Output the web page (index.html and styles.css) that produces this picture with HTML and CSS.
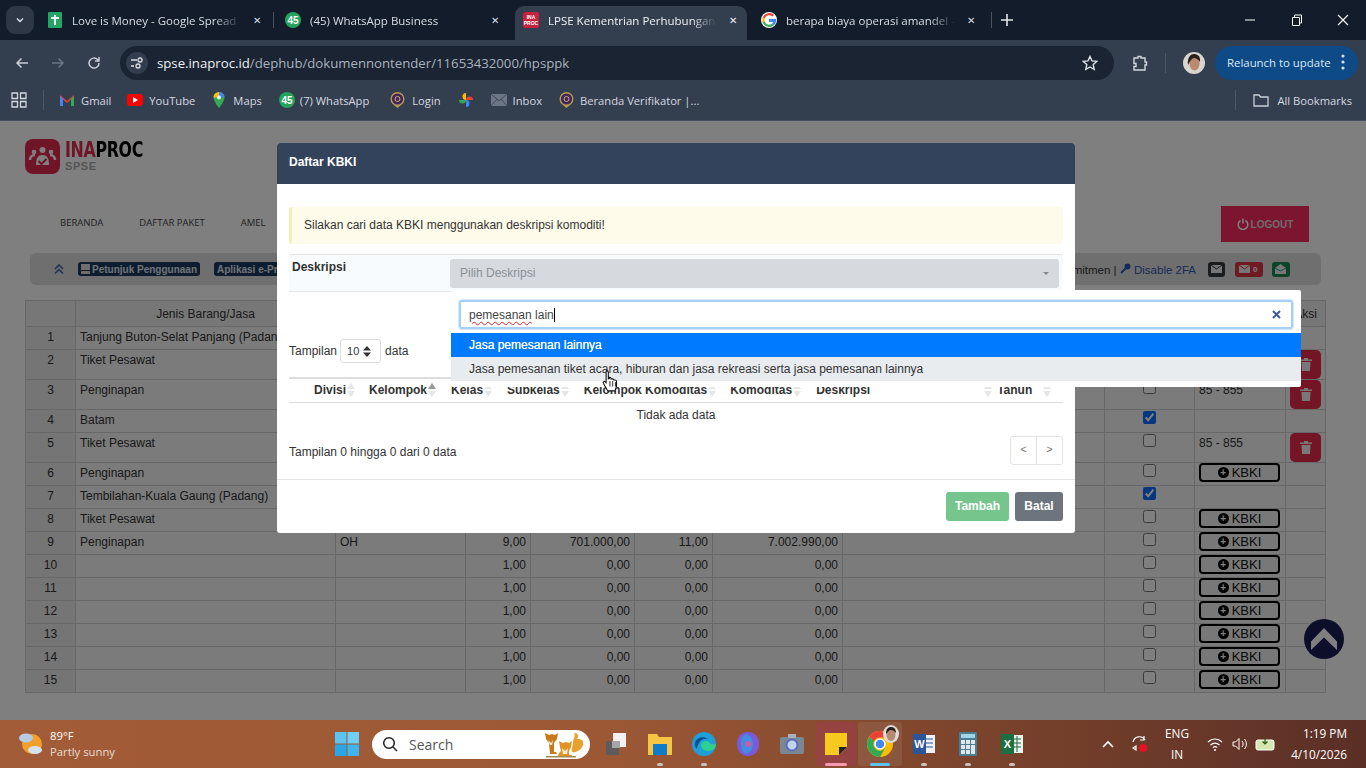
FILE: index.html
```html
<!DOCTYPE html>
<html lang="en">

<head>
    <meta charset="UTF-8">
    <title>LPSE Kementrian Perhubungan</title>
    <link rel="stylesheet" href="styles.css">
</head>

<body>
    <!-- browser tabs -->
    <div class="tabstrip">
        <div class="tab-search"><svg width="10" height="10" viewBox="0 0 10 10"><path d="M2 3.5l3 3 3-3" fill="none" stroke="#dfe3ea" stroke-width="1.4"/></svg></div>
        <div class="tab">
            <svg class="fav" viewBox="0 0 16 16"><rect x="1" y="0" width="14" height="16" rx="1" fill="#23a566"/><path d="M4 6h8M8 3v10" stroke="#fff" stroke-width="2"/></svg>
            <span class="tab-title">Love is Money - Google Spread</span><span class="tab-x">&#10005;</span>
        </div>
        <div class="tab-sep"></div>
        <div class="tab">
            <svg class="fav" viewBox="0 0 16 16"><circle cx="8" cy="8" r="8" fill="#25a35a"/><text x="8" y="11.5" class="fav-num">45</text></svg>
            <span class="tab-title">(45) WhatsApp Business</span><span class="tab-x">&#10005;</span>
        </div>
        <div class="tab active">
            <svg class="fav" viewBox="0 0 16 16"><rect width="16" height="16" rx="2" fill="#c4243e"/><text x="8" y="7" class="fav-tiny">INA</text><text x="8" y="12.5" class="fav-tiny">PROC</text></svg>
            <span class="tab-title">LPSE Kementrian Perhubungan</span><span class="tab-x">&#10005;</span>
        </div>
        <div class="tab">
            <svg class="fav" viewBox="0 0 16 16"><circle cx="8" cy="8" r="8" fill="#fff"/><path d="M8 3.2a4.8 4.8 0 0 1 3.3 1.3l1.7-1.7A7.2 7.2 0 0 0 1.7 5.2l2 1.6A4.8 4.8 0 0 1 8 3.2z" fill="#ea4335"/><path d="M3.7 6.8l-2-1.6a7.2 7.2 0 0 0 0 5.6l2-1.6a4.8 4.8 0 0 1 0-2.4z" fill="#fbbc05"/><path d="M8 12.8a4.8 4.8 0 0 1-4.3-3.6l-2 1.6A7.2 7.2 0 0 0 12.9 13.3L11 11.8A4.8 4.8 0 0 1 8 12.8z" fill="#34a853"/><path d="M15 7H8v3h4.100a3.500 3.500 0 0 1-1.100 1.800l1.900 1.500A7 7 0 0 0 15 7z" fill="#4285f4"/></svg>
            <span class="tab-title">berapa biaya operasi amandel -</span><span class="tab-x">&#10005;</span>
        </div>
        <div class="tab-sep plus-sep"></div>
        <svg class="tab-plus" width="12" height="12" viewBox="0 0 12 12"><path d="M6 0v12M0 6h12" stroke="#e3e6ec" stroke-width="1.6"/></svg>
        <div class="win-btns">
            <svg width="12" height="12" viewBox="0 0 12 12"><path d="M1 6h10" stroke="#fff"/></svg>
            <svg width="12" height="12" viewBox="0 0 12 12"><path d="M1.5 3.5h7v8h-7zM3.5 3.5V1h7v8H8.500" fill="none" stroke="#fff"/></svg>
            <svg width="12" height="12" viewBox="0 0 12 12"><path d="M1 1l10 10M11 1L1 11" stroke="#fff" stroke-width="1.1"/></svg>
        </div>
    </div>

    <!-- address bar -->
    <div class="toolbar">
        <svg class="tool-ic" viewBox="0 0 16 16"><path d="M14 8H3M7.5 3.500L3 8l4.500 4.500" fill="none" stroke="#c9ced6" stroke-width="1.5"/></svg>
        <svg class="tool-ic" viewBox="0 0 16 16"><path d="M2 8h11M8.5 3.500L13 8l-4.500 4.500" fill="none" stroke="#6d7684" stroke-width="1.5"/></svg>
        <svg class="tool-ic" viewBox="0 0 16 16"><path d="M13 8a5 5 0 1 1-1.500-3.500L13 6M13 2v4H9" fill="none" stroke="#c9ced6" stroke-width="1.5"/></svg>
        <div class="omnibox">
            <div class="site-info"><svg width="14" height="14" viewBox="0 0 14 14"><path d="M1 4h6M1 10h3" stroke="#dde1e7" stroke-width="1.3"/><circle cx="10" cy="4" r="2" fill="none" stroke="#dde1e7" stroke-width="1.3"/><circle cx="8" cy="10" r="2" fill="none" stroke="#dde1e7" stroke-width="1.3"/></svg></div>
            <span class="url"><b>spse.inaproc.id</b>/dephub/dokumennontender/11653432000/hpsppk</span>
            <svg class="star" width="16" height="16" viewBox="0 0 16 16"><path d="M8 1.500l2 4.400 4.800.5-3.600 3.200 1 4.700L8 12l-4.200 2.300 1-4.700L1.200 6.400 6 5.900z" fill="none" stroke="#dfe3ea" stroke-width="1.4"/></svg>
        </div>
        <svg class="ext-ic" width="18" height="18" viewBox="0 0 18 18"><path d="M3 4h4V2.500h3V4h4v4h1.500v3H14v5H3v-3.500h2v-3H3z" fill="none" stroke="#d3d7de" stroke-width="1.4"/></svg>
        <div class="tool-sep"></div>
        <svg class="avatar" width="22" height="22" viewBox="0 0 22 22"><circle cx="11" cy="11" r="11" fill="#d8d4ce"/><ellipse cx="11.500" cy="11.500" rx="5" ry="7" fill="#b98a70"/><path d="M5 13C4 5 8 2 11 2s7 2 6 8c-2-3-4-4-6-4S7 9 5 13z" fill="#2c201c"/></svg>
        <div class="relaunch">Relaunch to update<svg width="4" height="16" viewBox="0 0 4 16"><circle cx="2" cy="2" r="1.6" fill="#cfe2f7"/><circle cx="2" cy="8" r="1.6" fill="#cfe2f7"/><circle cx="2" cy="14" r="1.6" fill="#cfe2f7"/></svg></div>
    </div>

    <!-- bookmarks -->
    <div class="bookmarks">
        <svg class="bm-apps" width="16" height="16" viewBox="0 0 16 16"><path d="M1 1h5.500v5.500H1zM9.500 1H15v5.500H9.500zM1 9.500h5.500V15H1zM9.500 9.500H15V15H9.500z" fill="none" stroke="#d5d9e0" stroke-width="1.3"/></svg>
        <div class="bm-sep"></div>
        <div class="bm bm-gmail"><svg width="16" height="14" viewBox="0 0 16 14"><path d="M1 13V2l7 6 7-6v11h-3V6.500L8 10 4 6.500V13z" fill="#ea4335"/><path d="M1 13V3l3 3v7z" fill="#4285f4"/><path d="M12 13V6l3-3v10z" fill="#34a853"/></svg>Gmail</div>
        <div class="bm bm-yt"><svg width="16" height="12" viewBox="0 0 16 12"><rect width="16" height="12" rx="3" fill="#f00"/><path d="M6 3l5 3-5 3z" fill="#fff"/></svg>YouTube</div>
        <div class="bm bm-maps"><svg width="12" height="16" viewBox="0 0 12 16"><path d="M6 0a5.500 5.500 0 0 1 5.500 5.500C11.500 9.500 6 16 6 16S.5 9.500.5 5.500A5.500 5.500 0 0 1 6 0z" fill="#34a853"/><path d="M6 0a5.500 5.500 0 0 1 5.500 5.500L6 5.500z" fill="#4285f4"/><path d="M.5 5.500A5.500 5.500 0 0 1 6 0v5.500z" fill="#fbbc05"/><circle cx="6" cy="5.500" r="2" fill="#eee"/></svg>Maps</div>
        <div class="bm bm-wa"><svg width="16" height="16" viewBox="0 0 16 16"><circle cx="8" cy="8" r="8" fill="#25a35a"/><text x="8" y="11.5" class="fav-num">45</text></svg>(7) WhatsApp</div>
        <div class="bm bm-login"><svg width="15" height="16" viewBox="0 0 15 16"><path d="M4 13l3.500 3 3.500-3z" fill="#b89a4a"/><circle cx="7.500" cy="7" r="6.300" fill="#43245f" stroke="#b89a4a" stroke-width="1.4"/><circle cx="7.500" cy="7" r="2.500" fill="none" stroke="#c9b06a"/></svg>Login</div>
        <div class="bm bm-photos"><svg width="16" height="16" viewBox="0 0 16 16"><path d="M8 8V1a3.500 3.500 0 0 0 0 7z" fill="#fbbc05"/><path d="M8 8h7a3.500 3.500 0 0 0-7 0z" fill="#ea4335"/><path d="M8 8v7a3.500 3.500 0 0 0 0-7z" fill="#4285f4"/><path d="M8 8H1a3.500 3.500 0 0 0 7 0z" fill="#34a853"/></svg></div>
        <div class="bm bm-inbox"><svg width="16" height="12" viewBox="0 0 16 12"><rect width="16" height="12" fill="#6d7684"/><path d="M0 0l8 7 8-7M0 12l6-7M16 12l-6-7" fill="none" stroke="#404a59"/></svg>Inbox</div>
        <div class="bm bm-beranda"><svg width="15" height="16" viewBox="0 0 15 16"><path d="M4 13l3.500 3 3.500-3z" fill="#b89a4a"/><circle cx="7.500" cy="7" r="6.300" fill="#43245f" stroke="#b89a4a" stroke-width="1.4"/><circle cx="7.500" cy="7" r="2.500" fill="none" stroke="#c9b06a"/></svg>Beranda Verifikator |...</div>
        <div class="bm-sep bm-sep-right"></div>
        <div class="bm bm-all"><svg width="16" height="14" viewBox="0 0 16 14"><path d="M1 2h5l1.500 2H15v9H1z" fill="none" stroke="#c9ced6" stroke-width="1.3"/></svg>All Bookmarks</div>
    </div>

    <!-- page -->
    <div class="page">
        <div class="site-head">
            <div class="logo">
                <svg width="35" height="35" viewBox="0 0 35 35"><rect width="35" height="35" rx="8" fill="#e02a4e"/><circle cx="17.5" cy="11" r="3" fill="#fff"/><circle cx="9" cy="13" r="2.3" fill="#fff"/><circle cx="26" cy="13" r="2.3" fill="#fff"/><path d="M5 21c0-3 2-5 5-5M30 21c0-3-2-5-5-5" stroke="#fff" stroke-width="2.5" fill="none"/><path d="M11 26c0-7 2-10 6.500-10S24 19 24 26z" fill="#fff"/><path d="M13.5 22l3 3 5-5" stroke="#e02a4e" stroke-width="2" fill="none"/></svg>
                <div class="logo-text">
                    <div class="logo-name"><span>INA</span>PROC</div>
                    <div class="logo-sub">SPSE</div>
                </div>
            </div>
            <div class="nav-row">
                <div class="nav">
                    <span>BERANDA</span><span>DAFTAR PAKET</span><span>AMEL</span>
                </div>
                <div class="logout"><svg width="12" height="12" viewBox="0 0 12 12"><path d="M3.5 2.500a4.800 4.800 0 1 0 5 0M6 .5v5" fill="none" stroke="#fff" stroke-width="1.5"/></svg>LOGOUT</div>
            </div>
        </div>

        <div class="infobar">
            <div class="info-left">
                <svg class="chev" width="10" height="10" viewBox="0 0 10 10"><path d="M1 5l4-4 4 4M1 9.500l4-4 4 4" fill="none" stroke="#3a5fa8" stroke-width="1.5"/></svg>
                <span class="badge"><svg width="9" height="10" viewBox="0 0 9 10"><path d="M0 0h9v10H0z" fill="#ddd"/><path d="M0 6.500h9" stroke="#333"/></svg>Petunjuk Penggunaan</span>
                <span class="badge">Aplikasi e-Pr</span>
            </div>
            <div class="info-right">
                <span class="info-link">Komitmen | <svg width="11" height="11" viewBox="0 0 11 11"><circle cx="7.500" cy="3.500" r="3" fill="#2f57b0"/><path d="M5.500 5.500L1 10" stroke="#2f57b0" stroke-width="2"/></svg> <span class="blue-link">Disable 2FA</span></span>
                <span class="mail mail-dark"><svg width="11" height="8" viewBox="0 0 11 8"><rect width="11" height="8" fill="#eee"/><path d="M0 0l5.500 4L11 0" fill="none" stroke="#333"/></svg></span>
                <span class="mail mail-red"><svg width="11" height="8" viewBox="0 0 11 8"><rect width="11" height="8" fill="#eee"/><path d="M0 0l5.500 4L11 0" fill="none" stroke="#d33"/></svg><b>0</b></span>
                <span class="mail mail-green"><svg width="11" height="10" viewBox="0 0 11 10"><path d="M0 4l5.500-4L11 4v6H0z" fill="#eee"/><path d="M0 4l5.500 3L11 4" fill="none" stroke="#1a9"/></svg></span>
            </div>
        </div>

        <table class="hps">
            <thead>
                <tr><th></th><th>Jenis Barang/Jasa</th><th></th><th></th><th></th><th></th><th></th><th></th><th></th><th></th><th>Aksi</th></tr>
            </thead>
            <tbody>
                <tr><td class="no">1</td><td>Tanjung Buton-Selat Panjang (Padang)</td><td></td><td></td><td></td><td></td><td></td><td></td><td></td><td></td><td></td></tr>
                <tr class="tall"><td class="no">2</td><td>Tiket Pesawat</td><td></td><td></td><td></td><td></td><td></td><td></td><td class="chk"><input type="checkbox"></td><td>85 - 855</td><td class="act"><span class="trash"><svg width="12" height="13" viewBox="0 0 12 13"><path d="M0 1.500h12V3H0zM4 0h4v1.500H4zM1.500 4h9L10 13H2z" fill="#f2eef0"/></svg></span></td></tr>
                <tr class="tall"><td class="no">3</td><td>Penginapan</td><td></td><td></td><td></td><td></td><td></td><td></td><td class="chk"><input type="checkbox"></td><td>85 - 855</td><td class="act"><span class="trash"><svg width="12" height="13" viewBox="0 0 12 13"><path d="M0 1.500h12V3H0zM4 0h4v1.500H4zM1.500 4h9L10 13H2z" fill="#f2eef0"/></svg></span></td></tr>
                <tr><td class="no">4</td><td>Batam</td><td></td><td></td><td></td><td></td><td></td><td></td><td class="chk"><input type="checkbox" checked></td><td></td><td></td></tr>
                <tr class="tall"><td class="no">5</td><td>Tiket Pesawat</td><td></td><td></td><td></td><td></td><td></td><td></td><td class="chk"><input type="checkbox"></td><td>85 - 855</td><td class="act"><span class="trash"><svg width="12" height="13" viewBox="0 0 12 13"><path d="M0 1.500h12V3H0zM4 0h4v1.500H4zM1.500 4h9L10 13H2z" fill="#f2eef0"/></svg></span></td></tr>
                <tr><td class="no">6</td><td>Penginapan</td><td></td><td></td><td></td><td></td><td></td><td></td><td class="chk"><input type="checkbox"></td><td class="kb"><span class="kbki"><i>+</i>KBKI</span></td><td></td></tr>
                <tr><td class="no">7</td><td>Tembilahan-Kuala Gaung (Padang)</td><td></td><td></td><td></td><td></td><td></td><td></td><td class="chk"><input type="checkbox" checked></td><td></td><td></td></tr>
                <tr><td class="no">8</td><td>Tiket Pesawat</td><td></td><td></td><td></td><td></td><td></td><td></td><td class="chk"><input type="checkbox"></td><td class="kb"><span class="kbki"><i>+</i>KBKI</span></td><td></td></tr>
                <tr><td class="no">9</td><td>Penginapan</td><td>OH</td><td class="num">9,00</td><td class="num">701.000,00</td><td class="num">11,00</td><td class="num">7.002.990,00</td><td></td><td class="chk"><input type="checkbox"></td><td class="kb"><span class="kbki"><i>+</i>KBKI</span></td><td></td></tr>
                <tr><td class="no">10</td><td></td><td></td><td class="num">1,00</td><td class="num">0,00</td><td class="num">0,00</td><td class="num">0,00</td><td></td><td class="chk"><input type="checkbox"></td><td class="kb"><span class="kbki"><i>+</i>KBKI</span></td><td></td></tr>
                <tr><td class="no">11</td><td></td><td></td><td class="num">1,00</td><td class="num">0,00</td><td class="num">0,00</td><td class="num">0,00</td><td></td><td class="chk"><input type="checkbox"></td><td class="kb"><span class="kbki"><i>+</i>KBKI</span></td><td></td></tr>
                <tr><td class="no">12</td><td></td><td></td><td class="num">1,00</td><td class="num">0,00</td><td class="num">0,00</td><td class="num">0,00</td><td></td><td class="chk"><input type="checkbox"></td><td class="kb"><span class="kbki"><i>+</i>KBKI</span></td><td></td></tr>
                <tr><td class="no">13</td><td></td><td></td><td class="num">1,00</td><td class="num">0,00</td><td class="num">0,00</td><td class="num">0,00</td><td></td><td class="chk"><input type="checkbox"></td><td class="kb"><span class="kbki"><i>+</i>KBKI</span></td><td></td></tr>
                <tr><td class="no">14</td><td></td><td></td><td class="num">1,00</td><td class="num">0,00</td><td class="num">0,00</td><td class="num">0,00</td><td></td><td class="chk"><input type="checkbox"></td><td class="kb"><span class="kbki"><i>+</i>KBKI</span></td><td></td></tr>
                <tr><td class="no">15</td><td></td><td></td><td class="num">1,00</td><td class="num">0,00</td><td class="num">0,00</td><td class="num">0,00</td><td></td><td class="chk"><input type="checkbox"></td><td class="kb"><span class="kbki"><i>+</i>KBKI</span></td><td></td></tr>
            </tbody>
        </table>

        <div class="up-btn"><svg width="26" height="22" viewBox="0 0 26 22"><path d="M0 13.500L13 0l13 13.500V22L13 9.500 0 22z" fill="#fff"/></svg></div>

        <div class="backdrop"></div>

        <!-- modal -->
        <div class="modal">
            <div class="modal-head">Daftar KBKI</div>
            <div class="modal-body">
                <div class="alert">Silakan cari data KBKI menggunakan deskripsi komoditi!</div>
                <div class="form-row">
                    <label>Deskripsi</label>
                    <div class="select-box">Pilih Deskripsi<span class="caret-down"></span></div>
                </div>
                <div class="length-row">Tampilan <span class="length-select">10<svg width="8" height="11" viewBox="0 0 8 11"><path d="M4 0l4 4.500H0zM4 11L0 6.500h8z" fill="#333"/></svg></span> data</div>
                <div class="kbki-head">
                    <span class="col-divisi">Divisi<i class="sort"></i></span>
                    <span class="col-kelompok">Kelompok<i class="sort on"></i></span>
                    <span class="col-kelas">Kelas<i class="sort"></i></span>
                    <span class="col-subkelas">Subkelas<i class="sort"></i></span>
                    <span class="col-kk">Kelompok Komoditas<i class="sort"></i></span>
                    <span class="col-kom">Komoditas<i class="sort"></i></span>
                    <span class="col-desk">Deskripsi<i class="sort"></i></span>
                    <span class="col-tahun">Tahun<i class="sort"></i></span>
                </div>
                <div class="empty">Tidak ada data</div>
                <div class="table-foot">
                    <span class="foot-info">Tampilan 0 hingga 0 dari 0 data</span>
                    <div class="pager"><span>&lt;</span><span>&gt;</span></div>
                </div>
            </div>
            <div class="modal-foot">
                <button class="btn btn-add">Tambah</button>
                <button class="btn btn-cancel">Batal</button>
            </div>
        </div>

        <!-- select2 dropdown -->
        <div class="dropdown">
            <div class="search-wrap">
                <div class="search-input"><span class="typo">pemesanan</span>&nbsp;lain<span class="text-caret"></span><svg class="clear" width="9" height="9" viewBox="0 0 9 9"><path d="M1 1l7 7M8 1L1 8" stroke="#3f5a8c" stroke-width="2"/></svg></div>
            </div>
            <div class="opt opt-active">Jasa pemesanan lainnya</div>
            <div class="opt opt-hover">Jasa pemesanan tiket acara, hiburan dan jasa rekreasi serta jasa pemesanan lainnya</div>
        </div>

        <svg class="cursor" width="17" height="23" viewBox="0 0 15 21"><path d="M4 1.500c1 0 1.500.6 1.500 1.500v6l1-.2V7.500c1 0 1.500.3 1.500 1V9l1 0c1 0 1.500.5 1.500 1l1 0c1 0 1.500.7 1.500 1.500V16l-1.500 4H5L1 13c-.5-1 .5-2 1.500-1.500l1 1V3c0-1 .2-1.500.5-1.500z" fill="#fff" stroke="#111"/><path d="M7 11v5M9.500 11v5M12 12v4" stroke="#111" stroke-width=".8"/></svg>
    </div>

    <!-- windows taskbar -->
    <div class="taskbar">
        <div class="weather">
            <svg width="28" height="28" viewBox="0 0 28 28"><circle cx="15" cy="14" r="10" fill="#f2a02b"/><ellipse cx="9" cy="8" rx="7" ry="4.500" fill="#b6cbe4"/><ellipse cx="18" cy="20" rx="7" ry="4" fill="#d4e2f2"/></svg>
            <div class="weather-text"><div>89°F</div><div class="dim">Partly sunny</div></div>
        </div>
        <svg class="start" width="24" height="24" viewBox="0 0 24 24"><path d="M0 0h11.500v11.500H0z" fill="#5cc4f2"/><path d="M12.500 0H24v11.500H12.500z" fill="#6fd0f7"/><path d="M0 12.500h11.500V24H0z" fill="#2aa6e6"/><path d="M12.500 12.500H24V24H12.500z" fill="#3fb5ee"/></svg>
        <div class="task-search">
            <svg width="16" height="16" viewBox="0 0 16 16"><circle cx="7" cy="7" r="5.300" fill="none" stroke="#222" stroke-width="1.5"/><path d="M11 11l4 4" stroke="#222" stroke-width="1.5"/></svg>
            <span>Search</span>
            <svg class="fox" width="42" height="28" viewBox="0 0 42 28"><path d="M28 22c6 1 12-4 11-10-1-3-3-3-6-3 2-3 1-6-3-6 2 3-1 6-1 9 0 4-2 7-1 10z" fill="#e8a02f"/><path d="M1 3l4 2 3-1 3 1 3-2-1 6-3 4v9h2l1 2H6l-1-11-3-4z" fill="#c9791a"/><path d="M15 11l4 2 3-1 3 1 3-2-1 6-2 4v4h3v1H14l1-3 2-2-1-4z" fill="#e29324"/><path d="M18 18l3 3 3-3-1 6h-4z" fill="#fbeed8"/><path d="M4 10l3 3 2-3-1 5H6z" fill="#fbeed8"/><path d="M2 26h30v1.500H2z" fill="#9c8a55"/></svg>
        </div>
        <div class="task-icons">
            <div class="ti"><svg width="20" height="22" viewBox="0 0 20 22"><rect x="0" y="8" width="13" height="14" fill="#5d5b5b"/><rect x="7" y="0" width="13" height="14" fill="#f2f2f2"/><rect x="6" y="8" width="8" height="7" fill="#a6a6a8"/></svg></div>
            <div class="ti"><svg width="24" height="22" viewBox="0 0 24 22"><path d="M0 1h9l2 3h13v18H0z" fill="#f6c544"/><rect x="5" y="11" width="14" height="11" fill="#0f7cc9"/></svg><i class="pip"></i></div>
            <div class="ti"><svg width="24" height="24" viewBox="0 0 24 24"><circle cx="12" cy="12" r="12" fill="#1f9fd8"/><path d="M24 12c0 5-4 7-8 7s-7-3-7-6c0-2 2-4 5-4 2 0 4 1 4 3 3 1 6 0 6 0z" fill="#2fd08f"/><path d="M3 10c2-5 9-6 13-3-5-1-10 2-11 10-2-2-3-5-2-7z" fill="#0b4f96"/></svg><i class="pip"></i></div>
            <div class="ti"><svg width="22" height="24" viewBox="0 0 22 24"><path d="M11 0c7 0 11 5 11 12s-4 12-11 12S0 19 0 12 4 0 11 0z" fill="#7a5ad8"/><path d="M8 2c5 1 8 5 8 10s-3 9-8 10c-3-3-4-6-4-10s1-7 4-10z" fill="#3f8fe0"/><circle cx="11" cy="12" r="3" fill="#d35aa0"/></svg></div>
            <div class="ti"><svg width="24" height="20" viewBox="0 0 24 20"><rect y="3" width="24" height="17" rx="2" fill="#7b8894"/><rect x="8" width="8" height="4" fill="#a7b1ba"/><circle cx="12" cy="11" r="5.500" fill="#c4d3f0" stroke="#5b6cc0" stroke-width="2"/></svg></div>
            <div class="ti ti-active"><svg width="22" height="22" viewBox="0 0 22 22"><path d="M0 0h22v14l-8 8H0z" fill="#f7c91f"/><path d="M14 22l8-8h-8z" fill="#222"/></svg><i class="pip pip-pink"></i></div>
            <div class="ti ti-chrome"><svg width="26" height="26" viewBox="0 0 26 26"><circle cx="13" cy="13" r="13" fill="#fbbc05"/><path d="M13 0a13 13 0 0 1 11.300 6.500H13a6.500 6.500 0 0 0-6 4L2.300 5.700A13 13 0 0 1 13 0z" fill="#ea4335"/><path d="M2.300 5.700A13 13 0 0 0 13 26l5.500-9.500a6.500 6.500 0 0 1-11.500-6z" fill="#34a853"/><circle cx="13" cy="13" r="5" fill="#4285f4" stroke="#fff" stroke-width="1.5"/></svg><svg class="ti-face" width="16" height="18" viewBox="0 0 16 18"><ellipse cx="8" cy="9" rx="8" ry="9" fill="#ddd"/><ellipse cx="8" cy="10" rx="4.500" ry="6" fill="#b98a70"/><path d="M3 9c0-5 2-7 5-7s5 2 5 6c-2-2-3-3-5-3s-3 2-5 4z" fill="#2c201c"/></svg><i class="pip pip-blue"></i></div>
            <div class="ti"><svg width="22" height="22" viewBox="0 0 22 22"><rect x="8" y="2" width="14" height="18" fill="#eef2f8"/><path d="M13 6h7M13 10h7M13 14h7" stroke="#2b579a"/><rect y="1" width="13" height="20" rx="1" fill="#2b579a"/><text x="6.500" y="15" class="ti-letter">W</text></svg><i class="pip"></i></div>
            <div class="ti"><svg width="18" height="24" viewBox="0 0 18 24"><rect width="18" height="24" rx="1" fill="#4a7e90"/><rect x="2" y="2" width="14" height="4" fill="#9fd5e6"/><path d="M2 8h4v4H2zM7 8h4v4H7zM12 8h4v4h-4zM2 13h4v4H2zM7 13h4v4H7zM12 13h4v9h-4zM2 18h4v4H2zM7 18h4v4H7z" fill="#dfe7ea"/></svg><i class="pip"></i></div>
            <div class="ti"><svg width="22" height="22" viewBox="0 0 22 22"><rect x="8" y="2" width="14" height="18" fill="#eaf4ec"/><path d="M13 6h7M13 10h7M13 14h7M16 3v16" stroke="#1d6f42"/><rect y="1" width="13" height="20" rx="1" fill="#1d6f42"/><text x="6.500" y="15" class="ti-letter">X</text></svg><i class="pip"></i></div>
        </div>
        <div class="tray">
            <svg class="tray-chev" width="12" height="8" viewBox="0 0 12 8"><path d="M1 7l5-5 5 5" fill="none" stroke="#fff" stroke-width="1.6"/></svg>
            <svg class="tray-sync" width="18" height="20" viewBox="0 0 18 20"><path d="M2 8a6.500 6.500 0 0 1 12-2M13 2v4H9M2 14l3-2v4z" fill="none" stroke="#fff" stroke-width="1.2"/><circle cx="12" cy="14" r="4" fill="#e81123"/></svg>
            <div class="lang"><div>ENG</div><div>IN</div></div>
            <svg class="tray-wifi" width="16" height="14" viewBox="0 0 16 14"><path d="M1 5c4-4 10-4 14 0M3.500 8c3-2.500 6-2.500 9 0M6 10.500c1.300-1 2.700-1 4 0" fill="none" stroke="#fff" stroke-width="1.2"/><circle cx="8" cy="13" r="1" fill="#fff"/></svg>
            <svg class="tray-vol" width="16" height="14" viewBox="0 0 16 14"><path d="M1 5h2.500L7 1.500v11L3.500 9H1zM10 4c1.500 1.500 1.500 4.500 0 6M12.500 2c2.500 3 2.500 7 0 10" fill="none" stroke="#fff"/></svg>
            <svg class="tray-bat" width="20" height="14" viewBox="0 0 20 14"><rect x="1" y="3" width="18" height="10" rx="2" fill="#d4e8b0" stroke="#fff"/><path d="M10 0v7M7.500 4.500L10 7l2.500-2.500" fill="none" stroke="#2c5a1a" stroke-width="1.2"/></svg>
            <div class="clock"><div>1:19 PM</div><div>4/10/2026</div></div>
        </div>
    </div>
</body>

</html>
```
FILE: styles.css
```css
* {
    box-sizing: border-box;
}

html,
body {
    margin: 0;
    height: 768px;
    overflow: hidden;
}

body {
    font-family: "Liberation Sans", Arial, sans-serif;
    font-size: 12px;
    color: #333;
    display: flex;
    flex-direction: column;
}

/* browser chrome */
.tabstrip {
    height: 40px;
    background-color: #131c2b;
    display: flex;
    align-items: flex-end;
    font-family: "Open Sans", sans-serif;
    color: #d9dde3;
    flex-shrink: 0;
}

.tab-search {
    width: 28px;
    height: 28px;
    margin: 0 5px 6px 6px;
    background-color: #2d3746;
    border-radius: 9px;
    display: flex;
    align-items: center;
    justify-content: center;
}

.tab {
    width: 232px;
    height: 34px;
    padding: 0 8px 6px;
    display: flex;
    align-items: center;
    border-radius: 9px 9px 0 0;
    font-size: 11.5px;
    margin-right: 6px;
}

.tab.active {
    background-color: #333e4e;
    color: #f0f2f5;
}

.fav {
    width: 16px;
    height: 16px;
    margin-right: 9px;
    flex-shrink: 0;
}

.fav-num {
    font-size: 10px;
    font-weight: bold;
    fill: #fff;
    text-anchor: middle;
    font-family: "Liberation Sans", sans-serif;
}

.fav-tiny {
    font-size: 5px;
    font-weight: bold;
    fill: #fff;
    text-anchor: middle;
    font-family: "Liberation Sans", sans-serif;
}

.tab-title {
    flex: 1;
    white-space: nowrap;
    overflow: hidden;
    -webkit-mask-image: linear-gradient(to right, #000 85%, transparent);
    mask-image: linear-gradient(to right, #000 85%, transparent);
}

.tab-x {
    width: 12px;
    margin-left: 10px;
    font-size: 10px;
    text-align: center;
}

.tab-sep {
    width: 1px;
    height: 16px;
    background-color: #4a5361;
    margin: 0 3px 12px -4px;
}

.plus-sep {
    margin: 0 0 12px 0;
}

.tab-plus {
    margin: 0 0 14px 9px;
}

.win-btns {
    margin-left: auto;
    width: 140px;
    height: 40px;
    display: flex;
    align-items: center;
    justify-content: space-between;
    padding: 0 17px 0 18px;
}

.toolbar {
    height: 44px;
    background-color: #333e4e;
    display: flex;
    align-items: flex-start;
    padding: 6px 7px 0 14px;
    flex-shrink: 0;
}

.tool-ic {
    width: 16px;
    height: 16px;
    margin: 9px 20px 0 0;
}

.tool-ic:nth-child(3) {
    margin-right: 18px;
}

.omnibox {
    width: 994px;
    height: 34px;
    background-color: #1a2433;
    border-radius: 17px;
    display: flex;
    align-items: center;
    padding: 0 16px 0 6px;
    font-family: "Open Sans", sans-serif;
    font-size: 13.2px;
    color: #aab2be;
}

.site-info {
    width: 22px;
    height: 22px;
    border-radius: 50%;
    background-color: #323d4d;
    display: flex;
    align-items: center;
    justify-content: center;
    margin-right: 9px;
}

.url b {
    font-weight: normal;
    color: #eef0f4;
}

.star {
    margin-left: auto;
}

.ext-ic {
    margin: 8px 0 0 17px;
}

.tool-sep {
    width: 1px;
    height: 20px;
    background-color: #4c5665;
    margin: 7px 16px 0 16px;
}

.avatar {
    margin: 6px 0 0 1px;
}

.relaunch {
    width: 143px;
    height: 34px;
    margin-left: 10px;
    border-radius: 17px;
    background-color: #0d4a86;
    color: #dbe9f8;
    font-family: "Open Sans", sans-serif;
    font-size: 11.4px;
    display: flex;
    align-items: center;
    justify-content: space-between;
    padding: 0 13px 2px 12px;
    white-space: nowrap;
}

.bookmarks {
    height: 37px;
    background-color: #333e4e;
    border-bottom: 1px solid #48535f;
    display: flex;
    align-items: center;
    padding: 0 0 4px 11px;
    font-family: "Open Sans", sans-serif;
    font-size: 11.2px;
    color: #d5d9e0;
    flex-shrink: 0;
}

.bm-sep {
    width: 1px;
    height: 20px;
    background-color: #4c5665;
    margin: 0 15px 0 16px;
}

.bm {
    display: flex;
    align-items: center;
    gap: 6px;
    white-space: nowrap;
}

.bm-yt {
    margin-left: 16px;
}

.bm-maps {
    margin-left: 18px;
    gap: 8px;
}

.bm-wa {
    margin-left: 17px;
    gap: 5px;
}

.bm-login {
    margin-left: 21px;
    gap: 7px;
}

.bm-photos {
    margin-left: 17px;
}

.bm-inbox {
    margin-left: 17px;
}

.bm-beranda {
    margin-left: 17px;
}

.bm-sep-right {
    margin: 0 17px 0 auto;
}

.bm-all {
    gap: 8px;
    margin-right: 14px;
}

/* page behind the dialog */
.page {
    position: relative;
    flex: 1;
    background-color: #fff;
    overflow: hidden;
}

.site-head {
    padding: 18px 57px 0 25px;
    height: 132px;
}

.logo {
    display: flex;
    gap: 5px;
    height: 35px;
}

.logo-name {
    font-family: "DejaVu Sans Condensed", "DejaVu Sans", sans-serif;
    font-weight: bold;
    font-size: 22px;
    line-height: 21px;
    letter-spacing: -.4px;
    color: #000;
    transform: scaleX(.8);
    transform-origin: left;
    white-space: nowrap;
}

.logo-name span {
    color: #e02a4e;
}

.logo-sub {
    font-weight: bold;
    font-size: 11px;
    line-height: 10px;
    margin-top: 1px;
    color: #aaa;
    letter-spacing: .6px;
}

.nav-row {
    display: flex;
    justify-content: space-between;
    margin-top: 32px;
}

.nav {
    font-family: "Open Sans", sans-serif;
    font-size: 9.5px;
    padding: 10px 0 0 35px;
    display: flex;
    gap: 36px;
    color: #444;
}

.logout {
    width: 88px;
    height: 36px;
    background-color: #f62a60;
    color: #e9d5da;
    font-size: 10px;
    font-weight: bold;
    display: flex;
    align-items: center;
    justify-content: center;
    gap: 2px;
}

.infobar {
    height: 32px;
    margin: 0 45px 0 30px;
    border-radius: 6px;
    background-color: #dedede;
    display: flex;
    justify-content: space-between;
    align-items: center;
    padding: 0 31px 0 24px;
}

.info-left,
.info-right {
    display: flex;
    align-items: center;
}

.chev {
    margin-right: 14px;
}

.badge {
    display: flex;
    align-items: center;
    gap: 2px;
    height: 14px;
    padding: 0 3px;
    border-radius: 3px;
    background-color: #1b3a5e;
    color: #dfe7f0;
    font-size: 10px;
    font-weight: bold;
    margin-right: 14px;
}

.info-link {
    font-size: 11.5px;
    margin-right: 12px;
}

.blue-link {
    color: #2f57b0;
}

.mail {
    height: 15px;
    margin-right: 10px;
    padding: 0 3px;
    border-radius: 3px;
    display: flex;
    align-items: center;
    gap: 3px;
    font-size: 8px;
    color: #fff;
}

.mail-dark {
    background-color: #343a40;
    width: 17px;
}

.mail-red {
    background-color: #dc3545;
    width: 28px;
    margin-right: 9px;
    padding: 0 4px;
}

.mail-green {
    background-color: #198754;
    width: 18px;
    margin-right: 0;
}

.hps {
    margin: 15px 0 0 25px;
    width: 1301px;
    table-layout: fixed;
    border-collapse: collapse;
    background-color: #f6f6f6;
}

.hps th:nth-child(1) {
    width: 50px;
}

.hps th:nth-child(2) {
    width: 260px;
}

.hps th:nth-child(3) {
    width: 130px;
}

.hps th:nth-child(4) {
    width: 65px;
}

.hps th:nth-child(5) {
    width: 104px;
}

.hps th:nth-child(6) {
    width: 78px;
}

.hps th:nth-child(7) {
    width: 130px;
}

.hps th:nth-child(8) {
    width: 262px;
}

.hps th:nth-child(9) {
    width: 90px;
}

.hps th:nth-child(10) {
    width: 91px;
}

.hps th,
.hps td {
    border: 1px solid #d0d0d0;
    padding: 1px 4px;
    line-height: 18px;
    vertical-align: top;
    font-weight: normal;
    white-space: nowrap;
    overflow: hidden;
}

.hps thead tr {
    height: 26px;
}

.hps thead th {
    vertical-align: middle;
    background-color: #eee;
}

.hps tbody tr {
    height: 23px;
}

.hps tbody tr.tall {
    height: 30px;
}

.hps .no {
    text-align: center;
    background-color: #eaeaea;
}

.num {
    text-align: right;
}

.chk {
    text-align: center;
}

.chk input {
    width: 13px;
    height: 13px;
    margin: 0;
    accent-color: #0d6efd;
}

.hps .kb {
    padding: 0 4px;
}

.kbki {
    display: flex;
    align-items: center;
    justify-content: center;
    gap: 3px;
    width: 81px;
    height: 19px;
    border: 2px solid #000;
    border-radius: 4px;
    color: #111;
    font-size: 13px;
    background-color: #f0f0f0;
}

.kbki i {
    width: 11px;
    height: 11px;
    border-radius: 50%;
    background-color: #000;
    color: #fff;
    font: bold 10px/11px "Liberation Sans", sans-serif;
    text-align: center;
}

.hps .act {
    padding: 0;
    text-align: center;
    line-height: 0;
}

.trash {
    display: inline-flex;
    align-items: center;
    justify-content: center;
    width: 31px;
    height: 29px;
    background-color: #e62a48;
    border-radius: 5px;
}

.backdrop {
    position: absolute;
    inset: 0;
    background-color: rgba(0, 0, 0, 0.5);
}

.up-btn {
    position: absolute;
    left: 1304px;
    top: 498px;
    width: 40px;
    height: 40px;
    border-radius: 50%;
    background-color: #1a1e54;
    display: flex;
    align-items: center;
    justify-content: center;
}

/* dialog */
.modal {
    position: absolute;
    left: 277px;
    top: 22px;
    width: 798px;
    height: 390px;
    background-color: #fff;
    border-radius: 3px;
    display: flex;
    flex-direction: column;
}

.modal-head {
    height: 41px;
    background-color: #34435c;
    color: #fff;
    font-weight: bold;
    line-height: 38px;
    padding-left: 12px;
    border-radius: 3px 3px 0 0;
}

.modal-body {
    flex: 1;
    padding: 23px 12px 0;
}

.alert {
    height: 37px;
    background-color: #fffbea;
    border-left: 3px solid #f5eeb5;
    border-radius: 3px;
    padding-left: 12px;
    line-height: 36px;
}

.form-row {
    height: 38px;
    margin-top: 10px;
    background-color: #f8fbfe;
    border-top: 1px solid #e5e5e5;
    border-bottom: 1px solid #e5e5e5;
    display: flex;
    align-items: flex-start;
    padding: 4px 4px 0 3px;
}

.form-row label {
    width: 158px;
    font-weight: bold;
    line-height: 17px;
}

.select-box {
    position: relative;
    width: 609px;
    height: 29px;
    background-color: #d6dade;
    border-radius: 3px;
    color: #8a9097;
    line-height: 29px;
    padding-left: 10px;
}

.caret-down {
    position: absolute;
    right: 10px;
    top: 13px;
    border: 3px solid transparent;
    border-top-color: #888;
}

.length-row {
    margin-top: 47px;
    height: 24px;
    display: flex;
    align-items: center;
    gap: 3px;
}

.length-select {
    width: 41px;
    height: 24px;
    margin-right: 1px;
    border: 1px solid #ddd;
    border-radius: 3px;
    display: flex;
    align-items: center;
    padding-left: 6px;
    gap: 4px;
    font-size: 11px;
}

.kbki-head {
    margin-top: 14px;
    height: 26px;
    padding-bottom: 2px;
    border-top: 2px solid #ddd;
    border-bottom: 1px solid #ddd;
    font-weight: bold;
    display: flex;
    align-items: center;
}

.kbki-head span {
    white-space: nowrap;
    display: flex;
    align-items: center;
}

/* the two small triangles of a sortable column */
.sort {
    position: relative;
    width: 8px;
    height: 14px;
    margin-left: 1px;
}

.sort::before,
.sort::after {
    content: "";
    position: absolute;
    left: 0;
    border-left: 4px solid transparent;
    border-right: 4px solid transparent;
}

.sort::before {
    top: 0;
    border-bottom: 6px solid #e6e6e6;
}

.sort::after {
    bottom: 0;
    border-top: 6px solid #e6e6e6;
}

.sort.on::before {
    border-bottom-color: #999;
}

.col-divisi {
    margin-left: 25px;
}

.col-kelas,
.col-subkelas,
.col-kk,
.col-desk {
    margin-left: 15px;
}

.col-kelompok,
.col-kom {
    margin-left: 14px;
}

.col-desk {
    width: 176px;
    justify-content: space-between;
}

.col-tahun {
    margin-left: 5px;
    width: 54px;
    justify-content: space-between;
}

.empty {
    text-align: center;
    line-height: 24px;
}

.table-foot {
    display: flex;
    justify-content: space-between;
    align-items: center;
    margin-top: 9px;
}

.foot-info {
    margin-top: 2px;
}

.pager {
    display: flex;
    width: 53px;
    height: 29px;
    border: 1px solid #e3e3e3;
    border-radius: 3px;
    color: #777;
    font-size: 11px;
}

.pager span {
    flex: 1;
    text-align: center;
    line-height: 25px;
}

.pager span:first-child {
    border-right: 1px solid #e3e3e3;
}

.modal-foot {
    height: 54px;
    border-top: 1px solid #e5e5e5;
    display: flex;
    justify-content: flex-end;
    gap: 6px;
    padding: 12px 12px 0;
}

.btn {
    height: 29px;
    padding: 0 0 2px;
    border: none;
    border-radius: 3px;
    color: #fff;
    font: bold 12px "Liberation Sans", sans-serif;
}

.btn-add {
    width: 63px;
    background-color: #75c58d;
}

.btn-cancel {
    width: 48px;
    background-color: #6c757d;
}

/* select2 search dropdown */
.dropdown {
    position: absolute;
    left: 451px;
    top: 169px;
    width: 850px;
    height: 97px;
    background-color: #fff;
    border-radius: 2px;
}

.search-wrap {
    padding: 10px 8px 4px;
}

.search-input {
    height: 29px;
    border: 2px solid #a6d0f5;
    border-radius: 3px;
    box-shadow: 0 0 0 1px #d6e9fb;
    padding-left: 8px;
    display: flex;
    align-items: center;
    color: #444;
    position: relative;
}

.typo {
    text-decoration: underline wavy #e02020 1px;
    text-underline-offset: 2px;
}

.text-caret {
    width: 1px;
    height: 14px;
    background-color: #000;
}

.clear {
    position: absolute;
    right: 10px;
    top: 8px;
}

.opt {
    height: 24px;
    line-height: 24px;
    padding-left: 18px;
    white-space: nowrap;
}

.opt-active {
    background-color: #007bff;
    color: #fff;
    text-shadow: 0 0 .6px #fff;
}

.opt-hover {
    background-color: #e9ecef;
}

.cursor {
    position: absolute;
    left: 602px;
    top: 248px;
}

/* windows taskbar */
.taskbar {
    height: 48px;
    background: linear-gradient(to right, #a25c37 0, #9c5835 45%, #7a432c 72%, #5a2f26 100%);
    color: #fff;
    display: flex;
    align-items: center;
    font-family: "Open Sans", sans-serif;
    flex-shrink: 0;
}

.weather {
    width: 335px;
    padding-left: 17px;
    display: flex;
    align-items: center;
    gap: 5px;
    font-size: 11.3px;
    line-height: 16px;
}

.weather-text .dim {
    color: #e7dcd5;
}

.start {
    flex-shrink: 0;
}

.task-search {
    width: 218px;
    height: 29px;
    margin-left: 13px;
    background-color: #fff;
    border-radius: 15px;
    color: #555;
    font-size: 14px;
    display: flex;
    align-items: center;
    padding-left: 10px;
    gap: 11px;
}

.fox {
    margin-left: auto;
    margin-right: 4px;
}

.task-icons {
    display: flex;
    margin-left: 4px;
}

.ti {
    position: relative;
    width: 44px;
    height: 44px;
    display: flex;
    align-items: center;
    justify-content: center;
}

.ti-active {
    width: 40px;
    margin: 0 2px;
    background-color: rgba(160, 60, 80, .55);
    border-radius: 4px;
}

.ti-chrome {
    background-color: rgba(255, 255, 255, .08);
    border-radius: 4px;
}

.ti-face {
    position: absolute;
    right: 3px;
    top: 3px;
}

.ti-letter {
    font: bold 11px "Liberation Sans", sans-serif;
    fill: #fff;
    text-anchor: middle;
}

.pip {
    position: absolute;
    bottom: 0;
    left: 19px;
    width: 6px;
    height: 3px;
    border-radius: 2px;
    background-color: #c9c2bd;
}

.pip-pink {
    left: 9px;
    width: 22px;
    background-color: #f49ab0;
}

.pip-blue {
    left: 12px;
    width: 20px;
    background-color: #5cc4f2;
}

.tray {
    display: flex;
    align-items: center;
    flex: 1;
    font-size: 11.8px;
    line-height: 21px;
}

.tray-chev {
    margin-left: 68px;
}

.tray-sync {
    margin-left: 17px;
}

.lang {
    margin-left: 13px;
    width: 30px;
    text-align: center;
}

.tray-wifi {
    margin-left: 15px;
}

.tray-vol {
    margin-left: 9px;
}

.tray-bat {
    margin-left: 7px;
}

.clock {
    margin-left: auto;
    margin-right: 19px;
    text-align: right;
}
```
